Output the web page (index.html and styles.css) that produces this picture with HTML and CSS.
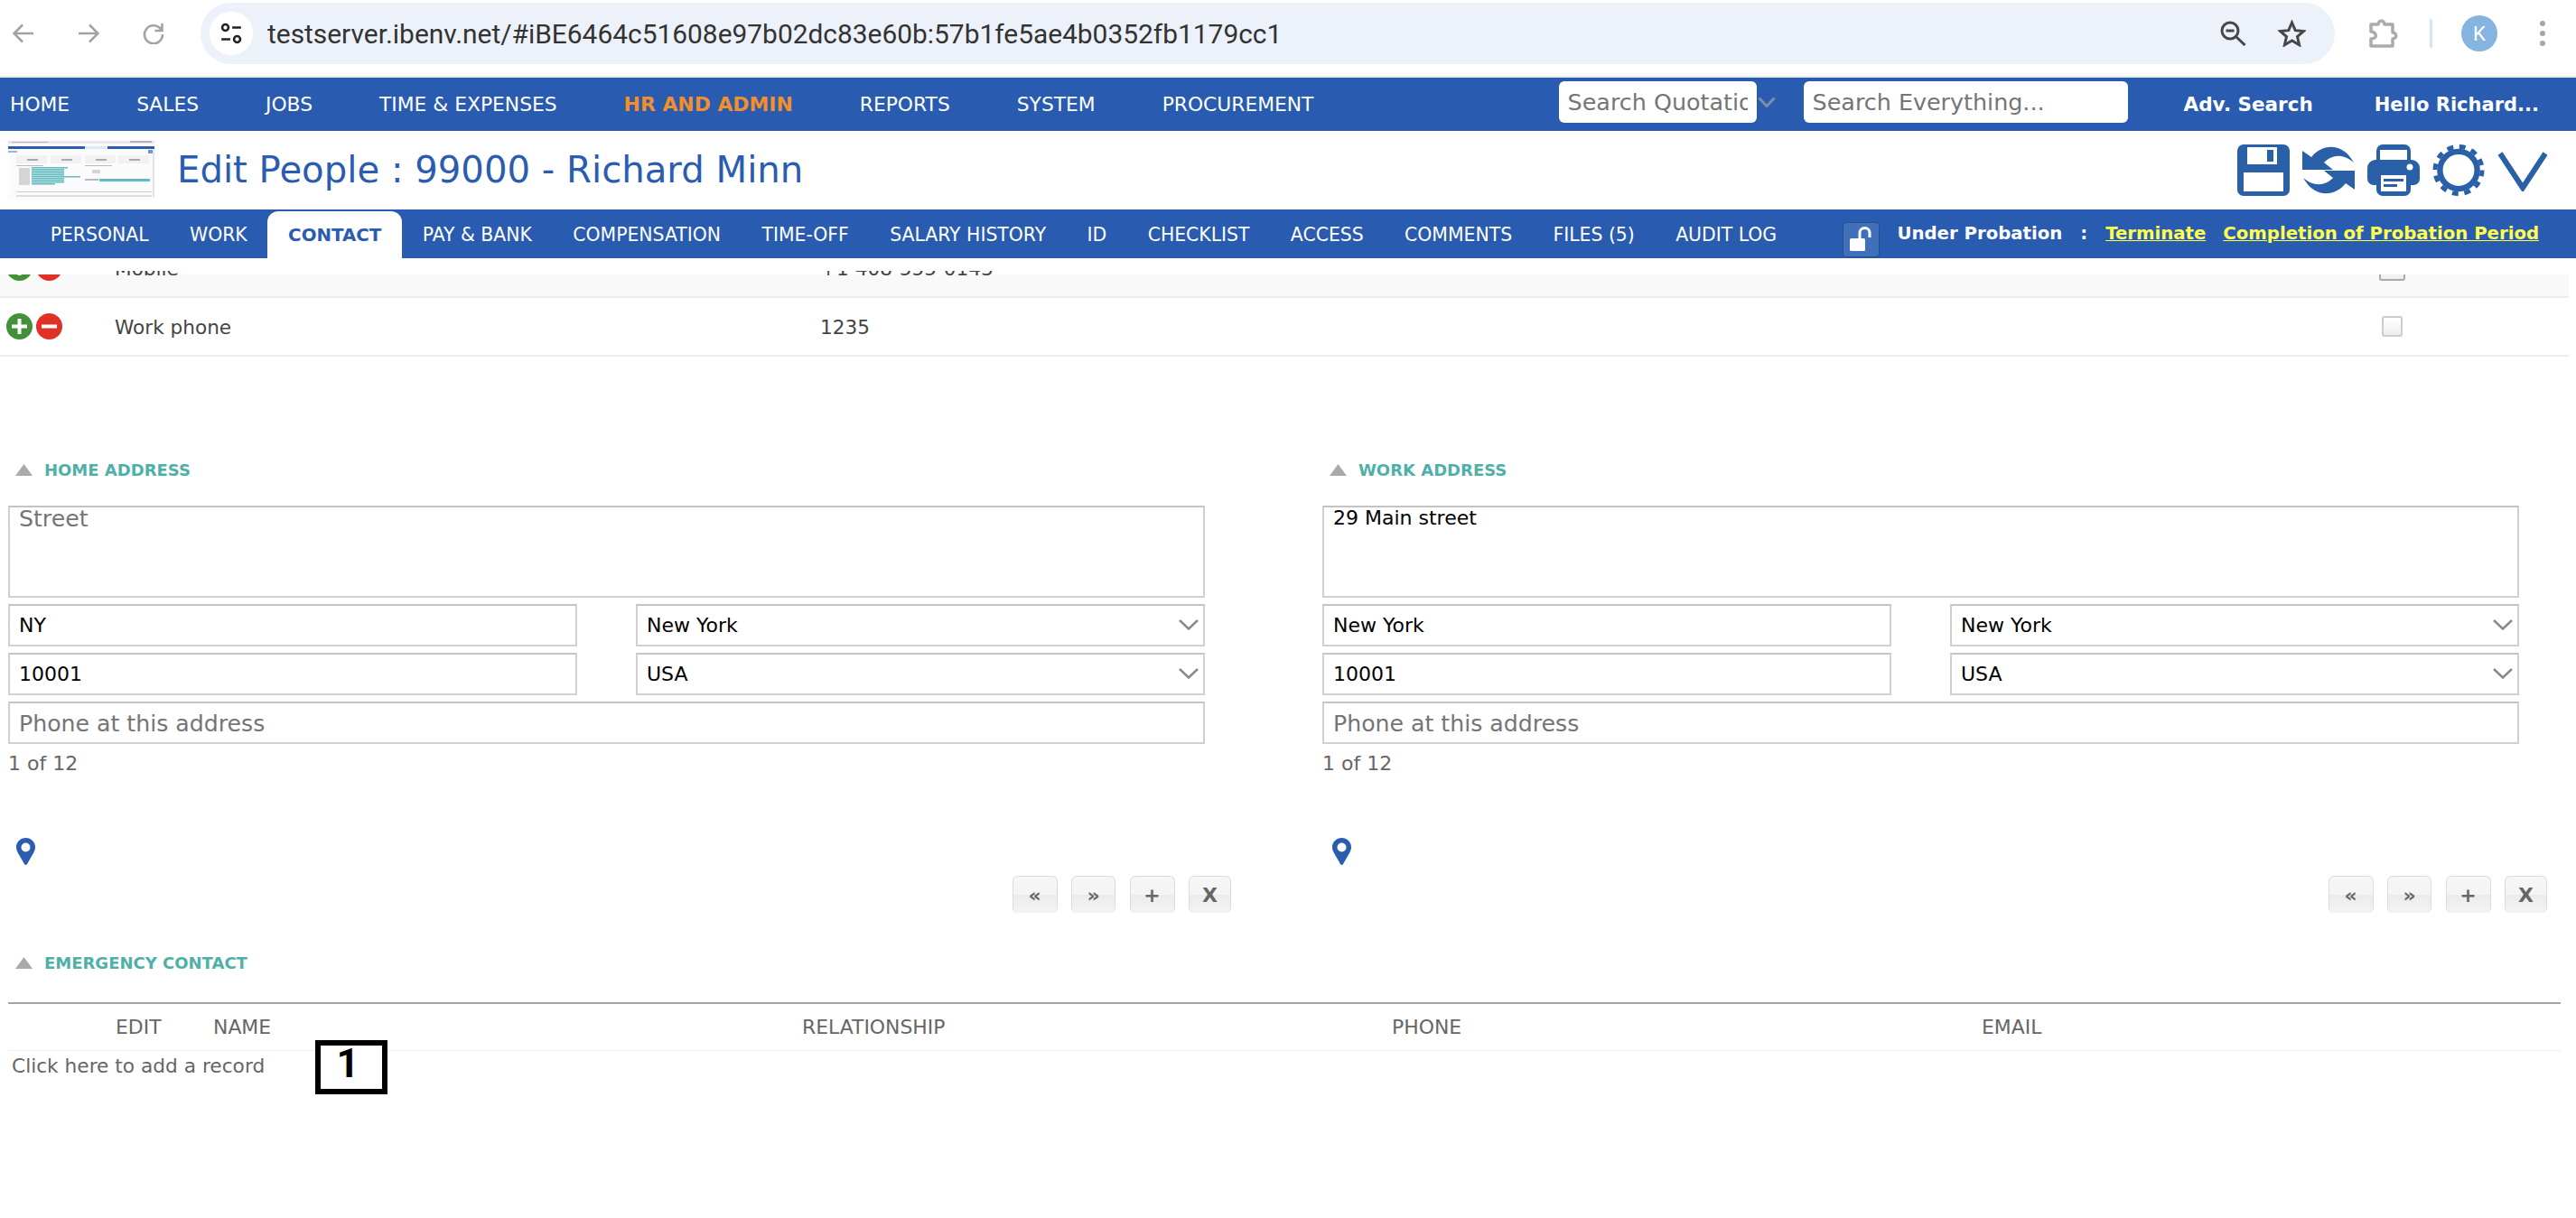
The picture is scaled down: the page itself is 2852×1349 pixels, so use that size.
FILE: index.html
```html
<!DOCTYPE html>
<html lang="en">
<head>
<meta charset="utf-8">
<title>Edit People</title>
<link rel="stylesheet" href="styles.css">
</head>
<body>
<div class="chrome">
  <svg class="tb-ico" viewBox="0 0 24 24"><path d="M23 12H2M11 2.500 1.500 12l9.500 9.500"/></svg>
  <svg class="tb-ico fw" viewBox="0 0 24 24"><path d="M1 12h21M13 2.500l9.500 9.500L13 21.500"/></svg>
  <svg class="tb-ico fw" viewBox="0 0 24 24"><path d="M20.500 8A10 10 0 1 0 22 13M21.500 1v8h-8"/></svg>
  <div class="addr-bar">
    <span class="site-info"><svg viewBox="0 0 24 24" width="26" height="26"><circle cx="6" cy="6" r="3.200"/><path d="M13 6h9M2 18h9"/><circle cx="18" cy="18" r="3.200"/></svg></span>
    <span class="url">testserver.ibenv.net/#iBE6464c51608e97b02dc83e60b:57b1fe5ae4b0352fb1179cc1</span>
    <svg class="bar-ico mag" viewBox="0 0 29 28"><circle cx="11" cy="11" r="9"/><path d="M6.500 11h9M18 18l9.500 9"/></svg>
    <svg class="bar-ico star" viewBox="0 0 31 30"><path d="M15.500 3l3.700 8.700 9.300.8-7 6.100 2.100 9.100-8.100-4.800-8.100 4.800 2.100-9.100-7-6.100 9.300-.8z"/></svg>
  </div>
  <svg class="ext" viewBox="0 0 33 32"><path d="M3 6h8c0-5 7-5 7 0h9v9c5 0 5 7 0 7v8H3v-8c5 0 6-3 5-5s-2-3-5-3z"/></svg>
  <span class="tb-sep"></span>
  <span class="avatar">K</span>
  <span class="dots"><i></i><i></i><i></i></span>
</div>

<nav class="topnav">
  <a>HOME</a><a>SALES</a><a>JOBS</a><a>TIME &amp; EXPENSES</a><a class="cur">HR AND ADMIN</a><a>REPORTS</a><a>SYSTEM</a><a>PROCUREMENT</a>
  <div class="nav-right">
    <input class="search s1" placeholder="Search Quotation...">
    <svg class="s-chev" viewBox="0 0 20 12"><path d="M1.500 1.500 10 10.500l8.500-9"/></svg>
    <input class="search s2" placeholder="Search Everything...">
    <b class="adv">Adv. Search</b>
    <b class="hello">Hello Richard...</b>
  </div>
</nav>

<header class="page-head">
  <svg class="thumb" viewBox="0 0 162 65">
    <rect width="162" height="65" fill="#fbfbfd"/>
    <rect x="0" y="0" width="162" height="3" fill="#e9e4ee"/>
    <rect x="4" y="1" width="40" height="1" fill="#b9b6c0"/>
    <rect x="135" y="0" width="24" height="2" fill="#b5b2bd"/>
    <rect x="0" y="6" width="162" height="3" fill="#2a5cb0"/>
    <rect x="85" y="6" width="25" height="3" fill="#dfe7f3"/>
    <rect x="0" y="11" width="10" height="2" fill="#9db8dd"/>
    <rect x="155" y="10" width="5" height="4" fill="#6f97cf"/>
    <rect x="160" y="10" width="2" height="52" fill="#e4e4e4"/>
    <rect x="9" y="16" width="34" height="9" fill="#f1f1f1"/><rect x="47" y="16" width="34" height="9" fill="#f1f1f1"/><rect x="85" y="16" width="34" height="9" fill="#f1f1f1"/><rect x="122" y="16" width="34" height="9" fill="#f1f1f1"/>
    <rect x="21" y="20" width="12" height="2" fill="#aaa"/><rect x="59" y="20" width="12" height="2" fill="#aaa"/><rect x="97" y="20" width="12" height="2" fill="#aaa"/><rect x="134" y="20" width="12" height="2" fill="#aaa"/>
    <rect x="9" y="27" width="30" height="1" fill="#bbb"/><rect x="85" y="27" width="30" height="1" fill="#bbb"/>
    <rect x="12" y="30" width="12" height="19" fill="#d5d5d5"/>
    <rect x="26" y="29" width="40" height="1.500" fill="#62bcc0"/><rect x="26" y="31" width="36" height="1.500" fill="#62bcc0"/><rect x="26" y="33" width="36" height="1.500" fill="#62bcc0"/><rect x="26" y="35" width="36" height="1.500" fill="#62bcc0"/><rect x="26" y="37" width="36" height="1.500" fill="#62bcc0"/><rect x="26" y="39" width="54" height="1.500" fill="#62bcc0"/><rect x="26" y="41" width="36" height="1.500" fill="#62bcc0"/><rect x="26" y="43" width="36" height="1.500" fill="#62bcc0"/><rect x="26" y="45" width="36" height="1.500" fill="#62bcc0"/><rect x="26" y="47" width="26" height="1.500" fill="#62bcc0"/>
    <rect x="101" y="42" width="56" height="3" fill="#62bcc0"/><rect x="85" y="42" width="15" height="2" fill="#bbb"/><rect x="93" y="32" width="9" height="4" fill="#d5d5d5"/>
    <rect x="9" y="56" width="150" height="1" fill="#cfcfcf"/><rect x="9" y="60" width="150" height="2" fill="#dcdcdc"/>
  </svg>
  <h1 class="title">Edit People : 99000 - Richard Minn</h1>
  <div class="actions">
    <svg viewBox="0 0 58 57"><rect width="58" height="57" rx="7"/><path class="w" d="M7 31h44v21H7zM11 3h33v19H11z"/><rect x="33" y="6" width="7" height="13"/><path class="w" d="M15 18h3v3h-3z"/></svg>
    <svg viewBox="0 0 58 57"><path d="M0 7l10 7C20 1 43-5 57 20 44 9 32 12 24 20l10 8H0z"/><path transform="rotate(180 29 28.500)" d="M0 7l10 7C20 1 43-5 57 20 44 9 32 12 24 20l10 8H0z"/></svg>
    <svg viewBox="0 0 58 57"><path d="M10 20V7a7 7 0 0 1 7-7h24a7 7 0 0 1 7 7v13h-4V6H14v14z"/><path d="M9 17h40a9 9 0 0 1 9 9v12a7 7 0 0 1-7 7h-3v5a7 7 0 0 1-7 7H17a7 7 0 0 1-7-7v-5H7a7 7 0 0 1-7-7V26a9 9 0 0 1 9-9z"/><circle class="w" cx="47" cy="25" r="3.500"/><rect class="w" x="15" y="34" width="28" height="18"/><rect x="18" y="38" width="22" height="3"/><rect x="18" y="44" width="15" height="3"/></svg>
    <svg viewBox="0 0 58 58"><circle class="ring" cx="29" cy="29" r="21"/><circle class="teeth" cx="29" cy="29" r="26.500"/></svg>
    <svg class="v" viewBox="0 0 56 46"><path class="vl" d="M3 4 28 42 53 4"/></svg>
  </div>
</header>

<div class="tabbar">
  <a class="tab">PERSONAL</a><a class="tab">WORK</a><a class="tab active">CONTACT</a><a class="tab">PAY &amp; BANK</a><a class="tab">COMPENSATION</a><a class="tab">TIME-OFF</a><a class="tab">SALARY HISTORY</a><a class="tab">ID</a><a class="tab">CHECKLIST</a><a class="tab">ACCESS</a><a class="tab">COMMENTS</a><a class="tab">FILES (5)</a><a class="tab">AUDIT LOG</a>
  <div class="tab-right">
    <span class="lock"><svg viewBox="0 0 28 28" width="28" height="28"><rect x="2" y="13" width="17" height="14" rx="1.500" fill="#fff"/><path d="M13 13V7a5.500 5.500 0 0 1 11 0v5" fill="none" stroke="#fff" stroke-width="3"/></svg></span>
    <b class="prob">Under Probation</b><b class="colon">:</b>
    <a class="ylink">Terminate</a><a class="ylink second">Completion of Probation Period</a>
  </div>
</div>

<main class="content">
  <div class="rows-clip">
    <div class="rows">
      <div class="row shaded">
        <span class="pm"><svg viewBox="0 0 29 29"><circle cx="14.500" cy="14.500" r="14.500" fill="#43903a"/><path d="M14.500 6v17M6 14.500h17" stroke="#fff" stroke-width="4"/></svg><svg viewBox="0 0 29 29"><circle cx="14.500" cy="14.500" r="14.500" fill="#e03127"/><path d="M6 14.500h17" stroke="#fff" stroke-width="4"/></svg></span>
        <span class="cell">Mobile</span><span class="cell">+1 408-555-0143</span><input class="chk big" type="checkbox">
      </div>
      <div class="row">
        <span class="pm"><svg viewBox="0 0 29 29"><circle cx="14.500" cy="14.500" r="14.500" fill="#43903a"/><path d="M14.500 6v17M6 14.500h17" stroke="#fff" stroke-width="4"/></svg><svg viewBox="0 0 29 29"><circle cx="14.500" cy="14.500" r="14.500" fill="#e03127"/><path d="M6 14.500h17" stroke="#fff" stroke-width="4"/></svg></span>
        <span class="cell">Work phone</span><span class="cell">1235</span><input class="chk" type="checkbox">
      </div>
    </div>
  </div>

  <div class="addresses">
    <section class="addr">
      <h2 class="sec-head"><svg class="tri" viewBox="0 0 19 13"><path d="M9.500 0 19 13H0z"/></svg>HOME ADDRESS</h2>
      <div class="form">
        <textarea class="f ta" placeholder="Street"></textarea>
        <div class="pair"><input class="f" value="NY"><div class="sel"><select class="f"><option>New York</option></select><svg viewBox="0 0 22 12"><path d="M1 1l10 9.500L21 1"/></svg></div></div>
        <div class="pair"><input class="f" value="10001"><div class="sel"><select class="f"><option>USA</option></select><svg viewBox="0 0 22 12"><path d="M1 1l10 9.500L21 1"/></svg></div></div>
        <input class="f ph" placeholder="Phone at this address">
        <div class="count">1 of 12</div>
      </div>
      <svg class="pin" viewBox="0 0 21 30"><path fill-rule="evenodd" d="M10.500 0C4.700 0 0 4.500 0 10.200c0 2.300.8 4.200 1.800 6.300L9 29c.7 1.200 2.300 1.200 3 0l7.200-12.500c1-2.100 1.800-4 1.800-6.300C21 4.500 16.300 0 10.500 0zm0 5.500a5 5 0 1 1 0 10 5 5 0 0 1 0-10z"/></svg>
      <div class="pager"><button class="pg w50">«</button><button class="pg w49">»</button><button class="pg w50">+</button><button class="pg w47">X</button></div>
    </section>
    <section class="addr">
      <h2 class="sec-head"><svg class="tri" viewBox="0 0 19 13"><path d="M9.500 0 19 13H0z"/></svg>WORK ADDRESS</h2>
      <div class="form">
        <textarea class="f ta">29 Main street</textarea>
        <div class="pair"><input class="f" value="New York"><div class="sel"><select class="f"><option>New York</option></select><svg viewBox="0 0 22 12"><path d="M1 1l10 9.500L21 1"/></svg></div></div>
        <div class="pair"><input class="f" value="10001"><div class="sel"><select class="f"><option>USA</option></select><svg viewBox="0 0 22 12"><path d="M1 1l10 9.500L21 1"/></svg></div></div>
        <input class="f ph" placeholder="Phone at this address">
        <div class="count">1 of 12</div>
      </div>
      <svg class="pin" viewBox="0 0 21 30"><path fill-rule="evenodd" d="M10.500 0C4.700 0 0 4.500 0 10.200c0 2.300.8 4.200 1.800 6.300L9 29c.7 1.200 2.300 1.200 3 0l7.200-12.500c1-2.100 1.800-4 1.800-6.300C21 4.500 16.300 0 10.500 0zm0 5.500a5 5 0 1 1 0 10 5 5 0 0 1 0-10z"/></svg>
      <div class="pager"><button class="pg w50">«</button><button class="pg w49">»</button><button class="pg w50">+</button><button class="pg w47">X</button></div>
    </section>
  </div>

  <section class="emergency">
    <h2 class="sec-head"><svg class="tri" viewBox="0 0 19 13"><path d="M9.500 0 19 13H0z"/></svg>EMERGENCY CONTACT</h2>
    <div class="etable">
      <div class="ehead"><span></span><span>EDIT</span><span>NAME</span><span>RELATIONSHIP</span><span>PHONE</span><span>EMAIL</span></div>
      <div class="erow">Click here to add a record</div>
      <div class="callout">1</div>
    </div>
  </section>
</main>
</body>
</html>
```

FILE: styles.css
```css
* { box-sizing: border-box; }
html, body { margin: 0; padding: 0; }
body {
  width: 2852px;
  height: 1349px;
  overflow: hidden;
  background: #fff;
  font-family: "DejaVu Sans", sans-serif;
  color: #444;
}

/* browser toolbar */
.chrome {
  display: flex;
  align-items: center;
  height: 86px;
  padding: 0 0 10px 14px;
  border-bottom: 2px solid #e8e8e8;
  background: #fff;
}
.tb-ico { width: 24px; height: 24px; fill: none; stroke: #a3a3a3; stroke-width: 2.6; flex: none; }
.tb-ico.fw { margin-left: 48px; }
.addr-bar {
  display: flex;
  align-items: center;
  width: 2363px;
  height: 68px;
  margin-left: 40px;
  padding: 0 32px 0 10px;
  border-radius: 34px;
  background: #edf2fa;
}
.site-info {
  display: flex;
  align-items: center;
  justify-content: center;
  width: 48px;
  height: 48px;
  border-radius: 50%;
  background: #fff;
}
.site-info svg { fill: none; stroke: #222; stroke-width: 2.400; }
.url {
  flex: 1;
  margin-left: 16px;
  font: 400 29.900px "Roboto", sans-serif;
  color: #333;
  white-space: nowrap;
}
.bar-ico { fill: none; stroke: #474747; stroke-width: 3; flex: none; }
.mag { width: 29px; height: 28px; }
.star { width: 31px; height: 30px; margin-left: 35px; }
.ext { width: 33px; height: 32px; margin-left: 37px; fill: none; stroke: #ababab; stroke-width: 3.500; stroke-linejoin: round; flex: none; }
.tb-sep { width: 3px; height: 32px; margin-left: 35px; border-radius: 2px; background: #d3e3fd; flex: none; }
.avatar {
  display: flex;
  align-items: center;
  justify-content: center;
  width: 40px;
  height: 40px;
  margin-left: 32px;
  border-radius: 50%;
  background: #85b4e0;
  color: #fff;
  font: 400 22px "Roboto", sans-serif;
  flex: none;
}
.dots { display: flex; flex-direction: column; gap: 5px; margin-left: 47px; }
.dots i { display: block; width: 6px; height: 6px; border-radius: 50%; background: #a6a6a6; }

/* main navigation */
.topnav {
  display: flex;
  align-items: center;
  gap: 74px;
  height: 59px;
  padding-left: 11px;
  background: #295bb0;
  color: #fff;
  font-size: 21.800px;
}
.topnav .cur { color: #f28f2c; font-weight: 700; font-size: 21.900px; }
.nav-right {
  display: flex;
  align-items: center;
  margin-left: auto;
  padding-right: 41px;
}
.search {
  height: 46px;
  margin-top: -5px;
  padding: 0 10px;
  border: 0;
  border-radius: 6px;
  background: #fff;
  font: 400 25.400px "DejaVu Sans", sans-serif;
}
.search::placeholder { color: #757575; opacity: 1; }
.s1 { width: 219px; }
.s2 { width: 359px; margin-left: 31px; }
.s-chev { width: 20px; height: 12px; margin: -6px 0 0 1px; fill: none; stroke: #7f8fa8; stroke-width: 3; }
.adv { margin-left: 62px; font-size: 21.500px; }
.hello { margin-left: 68px; font-size: 21px; }

/* page header */
.page-head {
  display: flex;
  align-items: center;
  height: 87px;
  padding-left: 9px;
}
.thumb { width: 162px; height: 65px; flex: none; }
.title {
  margin: -2px 0 0 25px;
  font-size: 40.200px;
  font-weight: 400;
  color: #2a5cb0;
}
.actions { display: flex; gap: 14px; margin-left: auto; padding-right: 31px; align-items: center; }
.actions svg { width: 58px; height: 57px; fill: #2a60a8; }
.actions .w { fill: #fff; }
.actions .v { width: 56px; height: 46px; }
.vl { fill: none; stroke: #2a60a8; stroke-width: 6; }
.ring { fill: none; stroke: #2a60a8; stroke-width: 6.500; }
.teeth { fill: none; stroke: #2a60a8; stroke-width: 5; stroke-dasharray: 7 6.880; }

/* tabs */
.tabbar {
  display: flex;
  align-items: flex-end;
  height: 54px;
  padding-left: 33px;
  background: #295bb0;
  color: #fff;
  font-size: 20.400px;
}
.tab {
  display: flex;
  align-items: center;
  height: 52px;
  padding: 0 22.700px;
  white-space: nowrap;
}
.tab.active {
  border-radius: 12px 12px 0 0;
  background: #fff;
  color: #2a5cb0;
  font-weight: 700;
  font-size: 19.800px;
}
.tab-right {
  display: flex;
  align-items: center;
  align-self: stretch;
  margin-left: auto;
  padding-right: 41px;
  font-size: 19.700px;
}
.lock {
  display: flex;
  align-items: flex-end;
  justify-content: center;
  width: 41px;
  height: 39px;
  margin-top: 12px;
  margin-right: 20px;
  padding-bottom: 5px;
  border: 1px solid #23508f;
  border-radius: 4px;
  background: #3f70b9;
}
.prob { margin-top: -2px; }
.colon { margin: -2px 0 0 20px; }
.ylink { margin: -2px 0 0 20px; color: #ffff4d; font-weight: 700; text-decoration: underline; }
.ylink.second { margin-left: 19px; }

/* content */
.content { padding-top: 14px; }
.rows-clip { height: 95px; overflow: hidden; }
.rows { margin-top: -35px; }
.row {
  display: grid;
  grid-template-columns: 127px 781px 1729px 23px;
  align-items: center;
  width: 2844px;
  height: 65px;
  border-bottom: 2px solid #ececec;
  font-size: 21.600px;
}
.row.shaded { background: linear-gradient(#fff 39px, #f9f9f9 39px); }
.cell { padding-top: 2px; }
.pm { display: flex; gap: 4px; padding-left: 7px; }
.pm svg { width: 29px; height: 29px; }
.shaded .pm { clip-path: inset(22px 0 0 0); }
.chk {
  appearance: none;
  width: 23px;
  height: 23px;
  margin: 0;
  border: 2px solid #ccc;
  border-radius: 3px;
  background: linear-gradient(#fff, #eee);
}
.chk.big {
  width: 29px;
  height: 29px;
  margin-left: -3px;
  border-color: #aaa;
  clip-path: inset(22px 0 0 0);
}

.addresses {
  display: grid;
  grid-template-columns: 1354px 1356px;
  gap: 101px;
  padding: 110px 0 0 9px;
}
.sec-head {
  display: flex;
  align-items: center;
  height: 30px;
  margin: 0;
  font-size: 18px;
  font-weight: 700;
  color: #4fb0a8;
}
.tri { width: 19px; height: 13px; margin: 0 13px 0 8px; fill: #aaa; flex: none; }
.form {
  display: flex;
  flex-direction: column;
  gap: 7px;
  width: 1325px;
  margin-top: 25px;
}
.f {
  display: block;
  width: 100%;
  height: 47px;
  margin: 0;
  padding: 0 10px;
  border: 2px solid #d0d0d0;
  border-top-color: #c4c4c4;
  border-radius: 0;
  outline: 0;
  background: #fff;
  color: #000;
  font: 400 22px "DejaVu Sans", sans-serif;
  appearance: none;
}
.ta { height: 102px; padding-top: 0; line-height: 1.050; resize: none; overflow: hidden; }
.ph { padding-top: 3px; }
.ta::placeholder, .ph::placeholder { color: #757575; opacity: 1; font-size: 25.200px; }
.pair { display: grid; grid-template-columns: 630px 630px; gap: 65px; }
.sel { position: relative; }
.sel svg {
  position: absolute;
  top: 17px;
  right: 7px;
  width: 22px;
  height: 12px;
  fill: none;
  stroke: #8a8a8a;
  stroke-width: 2.500;
}
.count { height: 30px; line-height: 30px; font-size: 22px; color: #666; }
.pin { display: block; width: 21px; height: 30px; margin: 67px 0 0 9px; fill: #2a5cb0; }
.addr + .addr .pin { margin-left: 11px; }
.pager { display: flex; justify-content: flex-end; gap: 15.500px; margin-top: 12px; }
.pg {
  height: 41px;
  padding: 0;
  border: 1px solid #ddd;
  border-bottom-width: 0;
  border-radius: 6px;
  background: linear-gradient(#f6f6f6 0, #f4f4f4 50%, #ebebeb 50%, #f4f4f4 100%);
  color: #666;
  font: 700 22px "DejaVu Sans", sans-serif;
}
.w50 { width: 50px; }
.w49 { width: 49px; }
.w47 { width: 47px; }

.emergency { padding: 40px 0 0 9px; }
.etable {
  position: relative;
  width: 2826px;
  margin-top: 29px;
  border-top: 2px solid #a3a3a3;
}
.ehead {
  display: grid;
  grid-template-columns: 119px 108px 652px 653px 653px 1fr;
  align-items: center;
  height: 52px;
  border-bottom: 1px solid #f0f0f0;
  font-size: 21.900px;
  color: #666;
}
.erow { padding: 2px 0 0 4px; line-height: 30px; font-size: 21.700px; color: #666; }
.callout {
  position: absolute;
  top: 40px;
  left: 340px;
  width: 80px;
  height: 60px;
  padding-right: 8px;
  border: 6px solid #000;
  background: #fff;
  color: #000;
  font: 700 44px/41px "Roboto", sans-serif;
  text-align: center;
}
```
